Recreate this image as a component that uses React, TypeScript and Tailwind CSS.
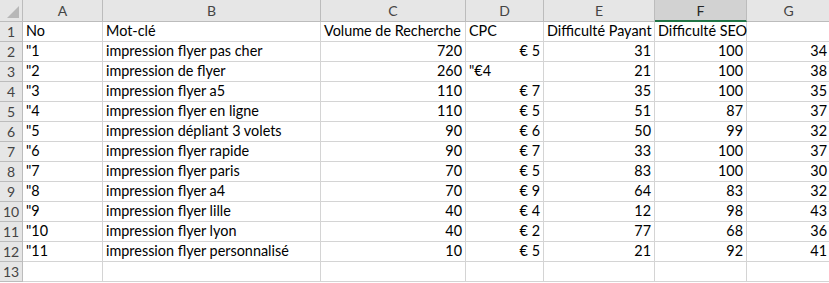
import React from "react";

const cols = [
  { k: "A", w: 80 },
  { k: "B", w: 218 },
  { k: "C", w: 145 },
  { k: "D", w: 78 },
  { k: "E", w: 111 },
  { k: "F", w: 92 },
  { k: "G", w: 84 },
];

type Cell = { t: string; r?: boolean };

const data: Cell[][] = [
  [{ t: "No" }, { t: "Mot-clé" }, { t: "Volume de Recherche" }, { t: "CPC" }, { t: "Difficulté Payant" }, { t: "Difficulté SEO" }, { t: "" }],
  [{ t: '"1' }, { t: "impression flyer pas cher" }, { t: "720", r: true }, { t: "€ 5", r: true }, { t: "31", r: true }, { t: "100", r: true }, { t: "34", r: true }],
  [{ t: '"2' }, { t: "impression de flyer" }, { t: "260", r: true }, { t: '"€4' }, { t: "21", r: true }, { t: "100", r: true }, { t: "38", r: true }],
  [{ t: '"3' }, { t: "impression flyer a5" }, { t: "110", r: true }, { t: "€ 7", r: true }, { t: "35", r: true }, { t: "100", r: true }, { t: "35", r: true }],
  [{ t: '"4' }, { t: "impression flyer en ligne" }, { t: "110", r: true }, { t: "€ 5", r: true }, { t: "51", r: true }, { t: "87", r: true }, { t: "37", r: true }],
  [{ t: '"5' }, { t: "impression dépliant 3 volets" }, { t: "90", r: true }, { t: "€ 6", r: true }, { t: "50", r: true }, { t: "99", r: true }, { t: "32", r: true }],
  [{ t: '"6' }, { t: "impression flyer rapide" }, { t: "90", r: true }, { t: "€ 7", r: true }, { t: "33", r: true }, { t: "100", r: true }, { t: "37", r: true }],
  [{ t: '"7' }, { t: "impression flyer paris" }, { t: "70", r: true }, { t: "€ 5", r: true }, { t: "83", r: true }, { t: "100", r: true }, { t: "30", r: true }],
  [{ t: '"8' }, { t: "impression flyer a4" }, { t: "70", r: true }, { t: "€ 9", r: true }, { t: "64", r: true }, { t: "83", r: true }, { t: "32", r: true }],
  [{ t: '"9' }, { t: "impression flyer lille" }, { t: "40", r: true }, { t: "€ 4", r: true }, { t: "12", r: true }, { t: "98", r: true }, { t: "43", r: true }],
  [{ t: '"10' }, { t: "impression flyer lyon" }, { t: "40", r: true }, { t: "€ 2", r: true }, { t: "77", r: true }, { t: "68", r: true }, { t: "36", r: true }],
  [{ t: '"11' }, { t: "impression flyer personnalisé" }, { t: "10", r: true }, { t: "€ 5", r: true }, { t: "21", r: true }, { t: "92", r: true }, { t: "41", r: true }],
  [{ t: "" }, { t: "" }, { t: "" }, { t: "" }, { t: "" }, { t: "" }, { t: "" }],
];

export default function App() {
  return (
    <div
      className="w-[829px] h-[283px] overflow-hidden bg-white text-[14.4px] text-black"
      style={{ fontFamily: "Lato, 'Open Sans', sans-serif" }}
    >
      <div className="flex h-[22px]">
        <div className="w-[23px] shrink-0 bg-[#e6e6e6] border-r border-b border-[#bcbcbc] relative">
          <div className="absolute right-[3px] bottom-[3px] w-0 h-0 border-l-[12px] border-l-transparent border-b-[12px] border-b-[#b8b8b8]" />
        </div>
        {cols.map((c) => (
          <div
            key={c.k}
            style={{ width: c.w }}
            className={
              c.k === "F"
                ? "shrink-0 flex items-center justify-center bg-[#d2d2d2] border-r border-[#bcbcbc] border-b-2 border-b-[#217346] text-[#262626] text-[14px]"
                : "shrink-0 flex items-center justify-center bg-[#e6e6e6] border-r border-b border-[#bcbcbc] text-[#444444] text-[14px]"
            }
          >
            {c.k}
          </div>
        ))}
      </div>
      {data.map((row, i) => (
        <div key={i} className="flex h-[20px]">
          <div className="w-[23px] shrink-0 bg-[#e6e6e6] border-r border-b border-[#bcbcbc] flex items-center justify-center text-[#444444] text-[14px]">
            {i + 1}
          </div>
          {row.map((cell, j) => (
            <div
              key={j}
              style={{ width: cols[j].w }}
              className={
                "shrink-0 border-r border-b border-[#d4d4d4] flex items-center px-[3px] whitespace-nowrap overflow-visible leading-none " +
                (cell.r ? "justify-end" : "justify-start")
              }
            >
              {cell.t}
            </div>
          ))}
        </div>
      ))}
    </div>
  );
}
